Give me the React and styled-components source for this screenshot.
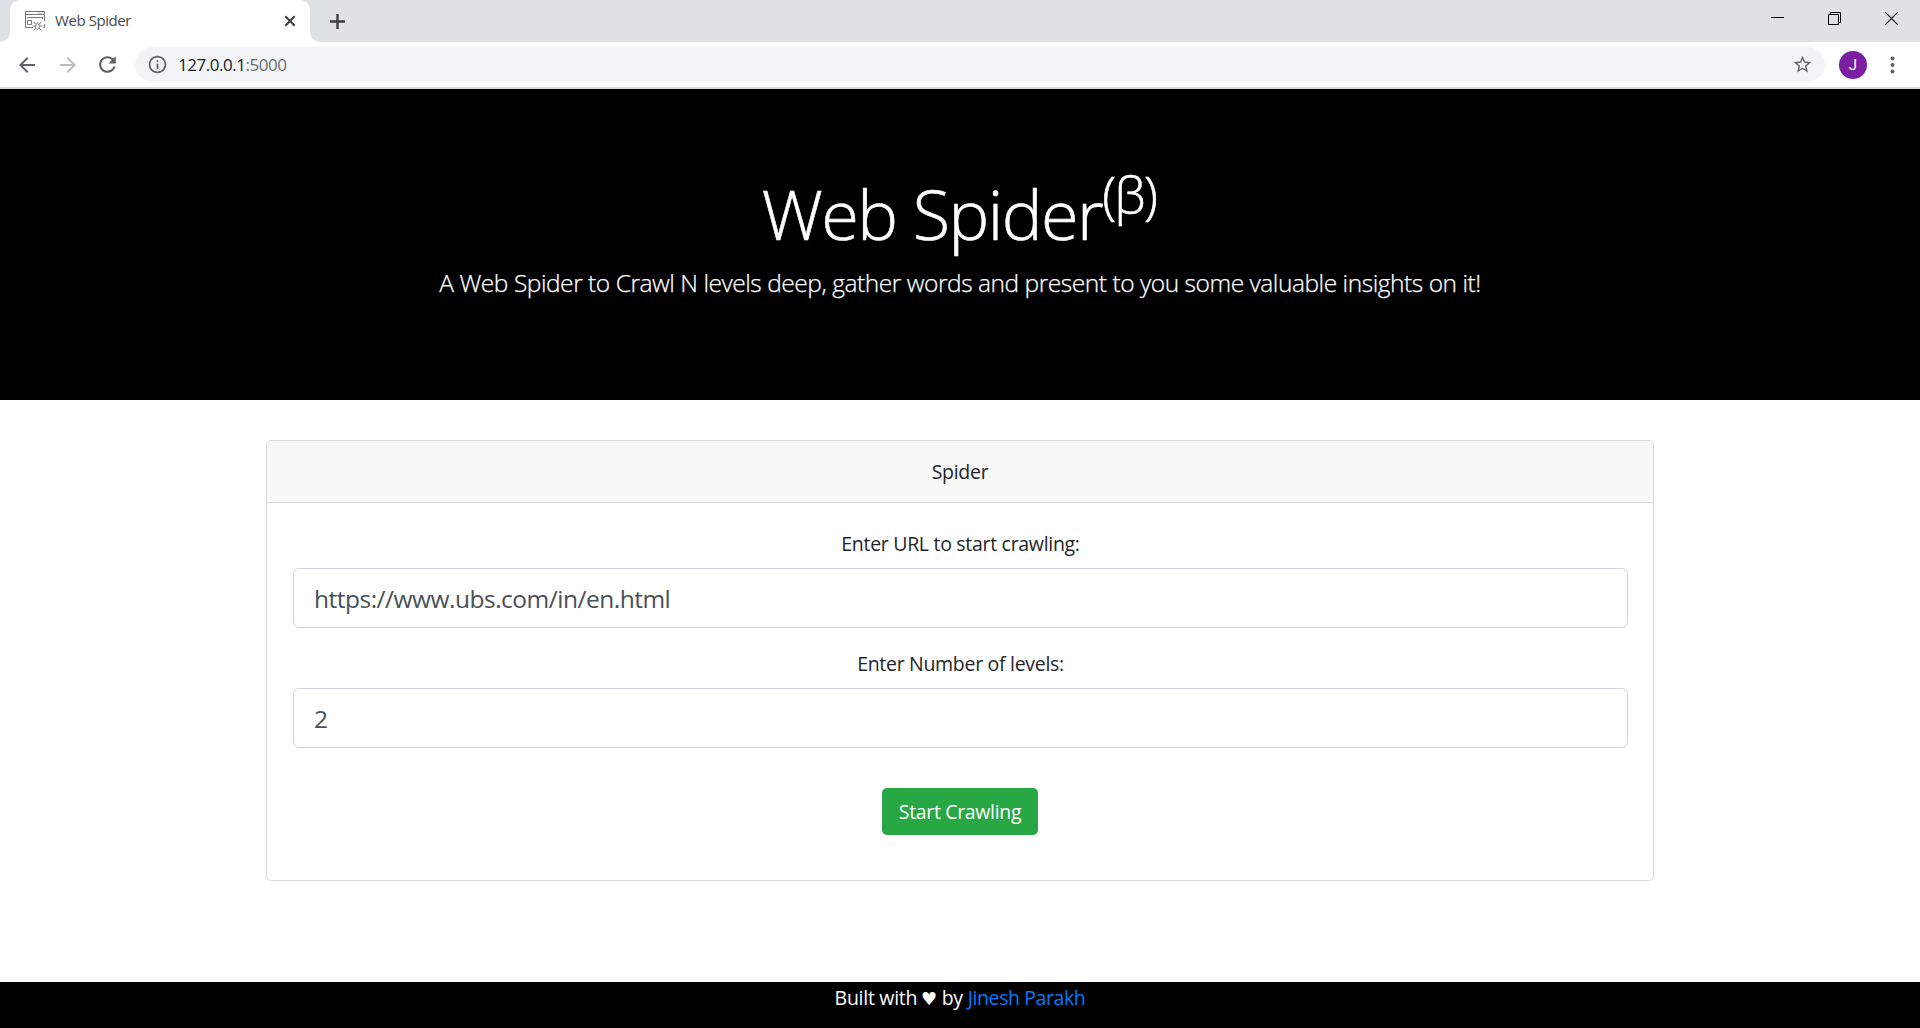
import React from "react";
import styled, { createGlobalStyle } from "styled-components";

const GlobalStyle = createGlobalStyle`
  *, *::before, *::after { box-sizing: border-box; }
  body {
    margin: 0;
    background: #fff;
    color: #212529;
    font-family: "Open Sans", "Noto Sans", sans-serif;
    font-size: 19.5px;
    line-height: 30px;
  }
`;

const Window = styled.div`
  display: flex;
  flex-direction: column;
  height: 1028px;
  overflow: hidden;
`;

const TabStrip = styled.header`
  display: flex;
  flex: none;
  height: 42px;
  padding-left: 10px;
  background: #dee1e6;
`;

const Tab = styled.div`
  position: relative;
  display: flex;
  align-items: center;
  width: 300px;
  padding: 0 14px 0 15px;
  border-radius: 10px 10px 0 0;
  background: #fff;

  &::before,
  &::after {
    content: "";
    position: absolute;
    bottom: 0;
    width: 10px;
    height: 10px;
  }
  &::before {
    left: -10px;
    background: radial-gradient(circle at 0 0, transparent 9.5px, #fff 10px);
  }
  &::after {
    right: -10px;
    background: radial-gradient(circle at 100% 0, transparent 9.5px, #fff 10px);
  }
`;

const TabTitle = styled.span`
  flex: 1;
  margin-left: 10px;
  color: #45494d;
  font-size: 15px;
  letter-spacing: -0.42px;
  line-height: 20px;
  padding-bottom: 2px;
`;

const IconButton = styled.button`
  display: flex;
  align-items: center;
  justify-content: center;
  flex: none;
  width: ${(p) => p.$width}px;
  height: ${(p) => p.$height || 42}px;
  padding: 0;
  border: 0;
  background: none;
  color: ${(p) => p.$color || "#5f6368"};

  svg { display: block; }
`;

const WindowControls = styled.div`
  display: flex;
  margin-left: auto;
`;

const Toolbar = styled.nav`
  display: flex;
  align-items: center;
  flex: none;
  height: 47px;
  padding: 0 7px;
  border-bottom: 2px solid #d5d7db;
  background: #fff;
`;

const AddressBar = styled.div`
  display: flex;
  align-items: center;
  flex: 1;
  height: 35px;
  margin-left: 8px;
  padding: 0 12px;
  border-radius: 18px;
  background: #f1f3f4;
  color: #5f6368;
`;

const Address = styled.span`
  flex: 1;
  margin-left: 10px;
  font-size: 17px;
  letter-spacing: -0.47px;
  line-height: 22px;
  color: #6a6e73;
`;

const Host = styled.span`
  color: #202124;
`;

const Avatar = styled.div`
  width: 28px;
  height: 28px;
  margin: 0 5px 0 14px;
  border-radius: 50%;
  background: #7b1fa2;
  color: #fff;
  font: 15px/28px Roboto, sans-serif;
  text-align: center;
`;

const Hero = styled.section`
  flex: none;
  height: 311px;
  padding-top: 83px;
  background: #000;
  color: #fff;
  text-align: center;
`;

const Title = styled.h1`
  margin: 0 0 8px;
  padding-right: 2px;
  font-size: 68.5px;
  font-weight: 300;
  letter-spacing: -1.55px;
  line-height: 84px;
  -webkit-text-stroke: 0.6px #fff;
`;

const Sup = styled.sup`
  font-size: 51px;
  line-height: 0;
  vertical-align: 26px;
`;

const Lead = styled.p`
  margin: 0;
  font-size: 24.5px;
  font-weight: 300;
  letter-spacing: -0.455px;
  line-height: 38px;
  -webkit-text-stroke: 0.25px #fff;
`;

const Main = styled.main`
  flex: 1;
  padding: 40px 266px 0;
`;

const Card = styled.section`
  height: 441px;
  border: 1px solid #dcdcdc;
  border-radius: 5px;
  text-align: center;
`;

const CardHeader = styled.div`
  height: 62px;
  padding-top: 16px;
  border-bottom: 1px solid #d6d6d6;
  border-radius: 4px 4px 0 0;
  background: #f7f7f7;
  letter-spacing: -0.28px;
`;

const Form = styled.form`
  display: flex;
  flex-direction: column;
  align-items: center;
  padding: 26px 25px 0 26px;
`;

const Label = styled.label`
  margin-bottom: 9px;
  letter-spacing: -0.3px;
`;

const Input = styled.input`
  display: block;
  width: 100%;
  height: 60px;
  margin-bottom: 21px;
  padding: 1px 21px 0 20px;
  border: 1px solid #ced4da;
  border-radius: 6px;
  background: #fff;
  color: #495057;
  font: 24.5px/38px "Open Sans", "Noto Sans", sans-serif;
  letter-spacing: -0.5px;
`;

const Submit = styled.button`
  width: 156px;
  height: 47px;
  margin: 19px 1px 0 0;
  padding: 0;
  border: 0;
  border-radius: 5px;
  background: #28a745;
  color: #fff;
  font: inherit;
  letter-spacing: -0.34px;
`;

const Footer = styled.footer`
  flex: none;
  height: 46px;
  padding-top: 1px;
  background: #000;
  color: #fff;
  letter-spacing: -0.27px;
  text-align: center;
`;

const Heart = styled.span`
  margin: 0 0 0 -1px;
  font-family: "DejaVu Sans", sans-serif;
  font-size: 18px;
  line-height: 1;
`;

const AuthorLink = styled.a`
  color: #007bff;
  letter-spacing: -0.4px;
`;

const Favicon = () => (
  <svg width="20" height="20" viewBox="0 0 20 20" fill="none" stroke="#777" strokeWidth="1">
    <path d="M8 16.500H.5V.5h19V10M.5 3.500h19M3 6.500h15M17.500 6.500v2M2.500 6.500v1" />
    <path d="M12.500 2h1M14.500 2h1M16.500 2h1" />
    <path d="M2.500 9.500h4v4h-4zM19.500 13v3.500h-1" />
    <path d="M12.500 12c-2.500 1.500-2.500 5.500 0 6.500 2.500-1 2.500-5 0-6.500zM11 13.500l-2-2.500M14 13.500l2-2.500M10.500 15H7.500M14.500 15h3M11 17l-2.500 2.500M14 17l2.500 2.500" />
  </svg>
);

const Glyph = ({ size, d }) => (
  <svg width={size} height={size} viewBox="0 0 24 24" fill="currentColor">
    <path d={d} />
  </svg>
);

const icons = {
  back: "M20 11H7.830l5.590-5.590L12 4l-8 8 8 8 1.410-1.410L7.830 13H20v-2z",
  forward: "M12 4l-1.410 1.410L16.170 11H4v2h12.170l-5.580 5.590L12 20l8-8z",
  reload:
    "M17.650 6.350C16.200 4.900 14.210 4 12 4c-4.420 0-7.990 3.580-7.990 8s3.570 8 7.990 8c3.730 0 6.840-2.550 7.730-6h-2.080c-.820 2.330-3.040 4-5.650 4-3.310 0-6-2.690-6-6s2.690-6 6-6c1.660 0 3.140.690 4.220 1.780L13 11h7V4l-2.350 2.350z",
  info: "M11 7h2v2h-2zM11 11h2v6h-2zM12 2C6.480 2 2 6.480 2 12s4.480 10 10 10 10-4.480 10-10S17.520 2 12 2zm0 18c-4.410 0-8-3.590-8-8s3.590-8 8-8 8 3.590 8 8-3.590 8-8 8z",
  star: "M22 9.240l-7.190-.620L12 2 9.190 8.630 2 9.240l5.460 4.730L5.820 21 12 17.270 18.180 21l-1.630-7.030L22 9.240zM12 15.400l-3.760 2.270 1-4.280-3.320-2.880 4.380-.380L12 6.100l1.710 4.040 4.380.380-3.320 2.880 1 4.280L12 15.400z",
};

export default function App() {
  return (
    <Window>
      <GlobalStyle />
      <TabStrip>
        <Tab>
          <Favicon />
          <TabTitle>Web Spider</TabTitle>
          <IconButton $width={12} $color="#3c4043" aria-label="Close tab">
            <svg width="12" height="12" viewBox="0 0 12 12" stroke="currentColor" strokeWidth="2.1">
              <path d="M1.300 1.300l9.400 9.400M10.700 1.300l-9.400 9.400" />
            </svg>
          </IconButton>
        </Tab>
        <IconButton $width={55} $color="#3c4043" aria-label="New tab">
          <svg width="15" height="15" viewBox="0 0 15 15" stroke="currentColor" strokeWidth="2.4">
            <path d="M7.500 0v15M0 7.500h15" />
          </svg>
        </IconButton>
        <WindowControls>
          <IconButton $width={57} $height={37} $color="#000" aria-label="Minimize">
            <svg width="13" height="13" viewBox="0 0 13 13">
              <path d="M0 5h13v1H0z" />
            </svg>
          </IconButton>
          <IconButton $width={57} $height={37} $color="#000" aria-label="Restore">
            <svg width="13" height="13" viewBox="0 0 13 13" fill="none" stroke="currentColor">
              <path d="M.5 2.500h10v10H.5zM2.500 2.500V.5h10v10h-2" />
            </svg>
          </IconButton>
          <IconButton $width={57} $height={37} $color="#111" aria-label="Close">
            <svg width="13" height="13" viewBox="0 0 13 13" fill="none" stroke="currentColor" strokeWidth="1.1">
              <path d="M.3.3l12.400 12.400M12.700.3L.3 12.700" />
            </svg>
          </IconButton>
        </WindowControls>
      </TabStrip>
      <Toolbar>
        <IconButton $width={40} aria-label="Back">
          <Glyph size={24} d={icons.back} />
        </IconButton>
        <IconButton $width={41} $color="#babcbe" aria-label="Forward">
          <Glyph size={24} d={icons.forward} />
        </IconButton>
        <IconButton $width={39} aria-label="Reload">
          <Glyph size={25} d={icons.reload} />
        </IconButton>
        <AddressBar>
          <Glyph size={21} d={icons.info} />
          <Address>
            <Host>127.0.0.1</Host>:5000
          </Address>
          <Glyph size={21} d={icons.star} />
        </AddressBar>
        <Avatar>J</Avatar>
        <IconButton $width={41} aria-label="Menu">
          <svg width="5" height="18" viewBox="0 0 5 18" fill="currentColor">
            <circle cx="2.500" cy="2.500" r="2" />
            <circle cx="2.500" cy="9" r="2" />
            <circle cx="2.500" cy="15.500" r="2" />
          </svg>
        </IconButton>
      </Toolbar>
      <Hero>
        <Title>
          Web Spider<Sup>(β)</Sup>
        </Title>
        <Lead>
          A Web Spider to Crawl N levels deep, gather words and present to you some valuable insights on it!
        </Lead>
      </Hero>
      <Main>
        <Card>
          <CardHeader>Spider</CardHeader>
          <Form>
            <Label htmlFor="url">Enter URL to start crawling:</Label>
            <Input id="url" defaultValue="https://www.ubs.com/in/en.html" />
            <Label htmlFor="levels">Enter Number of levels:</Label>
            <Input id="levels" defaultValue="2" />
            <Submit type="button">Start Crawling</Submit>
          </Form>
        </Card>
      </Main>
      <Footer>
        Built with <Heart>♥</Heart> by <AuthorLink>Jinesh Parakh</AuthorLink>
      </Footer>
    </Window>
  );
}
